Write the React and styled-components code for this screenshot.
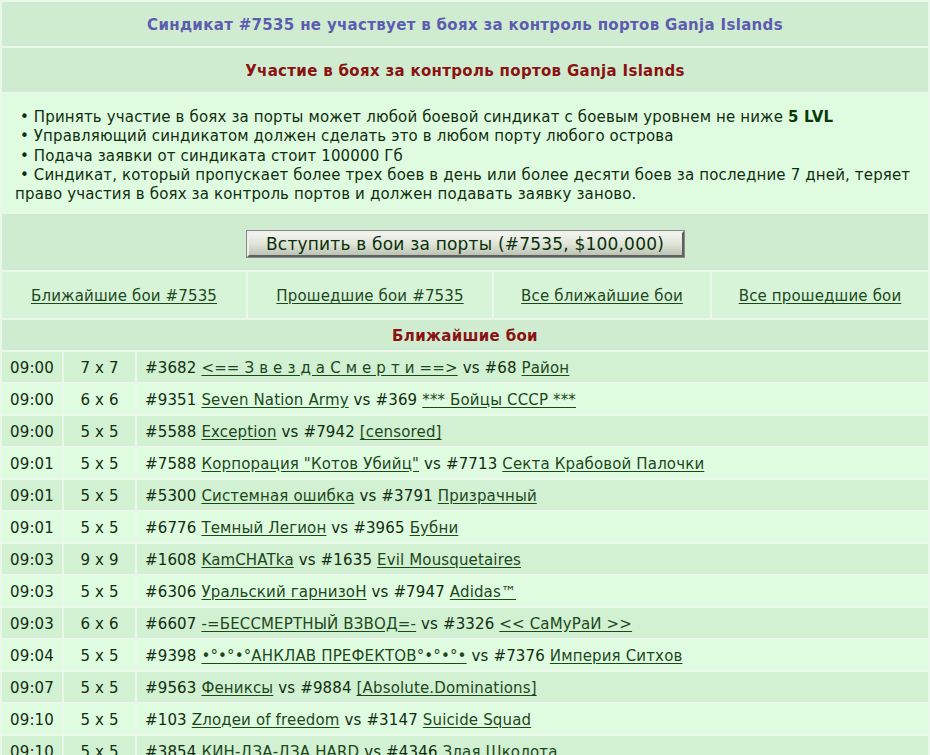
import React from 'react';
import styled, { createGlobalStyle } from 'styled-components';

const GlobalStyle = createGlobalStyle`
	html, body {
		margin: 0;
		padding: 0;
		background: #eaf8ea;
	}
	body {
		font-family: 'DejaVu Sans', Verdana, sans-serif;
		font-size: 15px;
		letter-spacing: 0.15px;
		color: #102e10;
	}
`;

const Page = styled.div`
	display: flex;
	flex-direction: column;
	gap: 2px;
	padding: 2px;
	width: 930px;
	box-sizing: border-box;
`;

const TitleRow = styled.div`
	height: ${(p) => p.h || 44}px;
	box-sizing: border-box;
	padding-top: 2px;
	display: flex;
	align-items: center;
	justify-content: center;
	background: #d0ecd0;
	font-weight: bold;
	font-size: 15px;
	letter-spacing: 0.32px;
	color: ${(p) => p.color};
`;

const InfoRow = styled.div`
	height: 118px;
	box-sizing: border-box;
	padding: 14px 13px 0 13px;
	background: #e0fce0;
	line-height: 19.3px;

	p {
		margin: 0;
	}
	b {
		color: #0a3a0a;
	}
`;

const ButtonRow = styled.div`
	height: 56px;
	display: flex;
	align-items: center;
	justify-content: center;
	background: #d0ecd0;
	padding-top: 3px;
	box-sizing: border-box;
`;

const JoinButton = styled.button`
	width: 437px;
	height: 26px;
	padding: 0;
	font-family: inherit;
	font-size: 17px;
	letter-spacing: 0.2px;
	color: #0a300a;
	background: linear-gradient(#f4f4f0, #dfe4d8 50%, #bcc4b4);
	border: 2px solid;
	border-color: #eef0ea #606060 #606060 #eef0ea;
	box-shadow: 0 0 0 1px #8a8a8a;
	cursor: pointer;
`;

const LinkRow = styled.div`
	display: grid;
	grid-template-columns: 244px 244px 1fr 1fr;
	gap: 2px;
	height: 46px;
`;

const LinkCell = styled.div`
	display: flex;
	align-items: center;
	justify-content: center;
	background: #d8f4d8;
	padding-top: 2px;
`;

const Link = styled.a`
	color: #1c481c;
	text-decoration: underline;
	text-underline-offset: 2px;
	cursor: pointer;
`;

const Battle = styled.div`
	display: grid;
	grid-template-columns: 60px 71px 1fr;
	gap: 2px;
	height: 30px;
`;

const Cell = styled.div`
	display: flex;
	align-items: center;
	justify-content: ${(p) => (p.center ? 'center' : 'flex-start')};
	padding-left: ${(p) => (p.center ? 0 : 8)}px;
	padding-top: 1px;
	background: ${(p) => (p.odd ? '#d2f0d2' : '#e0fce0')};
	white-space: pre;
`;

const battles = [
	['09:00', '7 x 7', '3682', '<== З в е з д а С м е р т и ==>', '68', 'Район'],
	['09:00', '6 x 6', '9351', 'Seven Nation Army', '369', '*** Бойцы СССР ***'],
	['09:00', '5 x 5', '5588', 'Exception', '7942', '[censored]'],
	['09:01', '5 x 5', '7588', 'Корпорация "Котов Убийц"', '7713', 'Секта Крабовой Палочки'],
	['09:01', '5 x 5', '5300', 'Системная ошибка', '3791', 'Призрачный'],
	['09:01', '5 x 5', '6776', 'Темный Легион', '3965', 'Бубни'],
	['09:03', '9 x 9', '1608', 'KamCHATka', '1635', 'Evil Mousquetaires'],
	['09:03', '5 x 5', '6306', 'Уральский гарнизоН', '7947', 'Adidas™'],
	['09:03', '6 x 6', '6607', '-=БЕССМЕРТНЫЙ ВЗВОД=-', '3326', '<< СаМуРаИ >>'],
	['09:04', '5 x 5', '9398', '•°•°•°АНКЛАВ ПРЕФЕКТОВ°•°•°•', '7376', 'Империя Ситхов'],
	['09:07', '5 x 5', '9563', 'Фениксы', '9884', '[Absolute.Dominations]'],
	['09:10', '5 x 5', '103', 'Zлодеи of freedom', '3147', 'Suicide Squad'],
	['09:10', '5 x 5', '3854', 'КИН-ДЗА-ДЗА HARD', '4346', 'Злая Школота'],
];

const links = ['Ближайшие бои #7535', 'Прошедшие бои #7535', 'Все ближайшие бои', 'Все прошедшие бои'];

function App() {
	return (
		<Page>
			<GlobalStyle />
			<TitleRow color='#5c5cb0'>
				Синдикат #7535 не участвует в боях за контроль портов Ganja Islands
			</TitleRow>
			<TitleRow color='#8a1212'>Участие в боях за контроль портов Ganja Islands</TitleRow>
			<InfoRow>
				<p>
					&nbsp;• Принять участие в боях за порты может любой боевой синдикат с боевым уровнем не ниже{' '}
					<b>5 LVL</b>
				</p>
				<p>&nbsp;• Управляющий синдикатом должен сделать это в любом порту любого острова</p>
				<p>&nbsp;• Подача заявки от синдиката стоит 100000 Гб</p>
				<p>
					&nbsp;• Синдикат, который пропускает более трех боев в день или более десяти боев за последние 7 дней, теряет
					право участия в боях за контроль портов и должен подавать заявку заново.
				</p>
			</InfoRow>
			<ButtonRow>
				<JoinButton>Вступить в бои за порты (#7535, $100,000)</JoinButton>
			</ButtonRow>
			<LinkRow>
				{links.map((l) => (
					<LinkCell key={l}>
						<Link>{l}</Link>
					</LinkCell>
				))}
			</LinkRow>
			<TitleRow h={30} color='#8a1212'>
				Ближайшие бои
			</TitleRow>
			{battles.map((b, i) => (
				<Battle key={i}>
					<Cell odd={i % 2 === 0}>{b[0]}</Cell>
					<Cell odd={i % 2 === 0} center>
						{b[1]}
					</Cell>
					<Cell odd={i % 2 === 0}>
						#{b[2]} <Link>{b[3]}</Link> vs #{b[4]} <Link>{b[5]}</Link>
					</Cell>
				</Battle>
			))}
		</Page>
	);
}

export default App;
